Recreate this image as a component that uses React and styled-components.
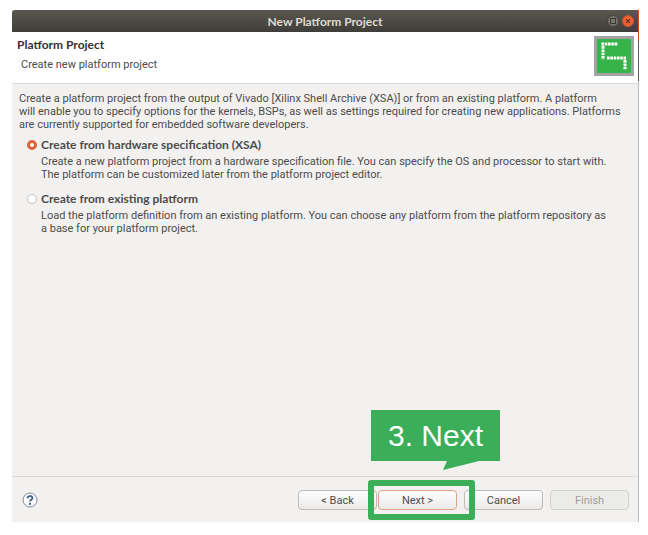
import React, { useState } from 'react';
import styled, { createGlobalStyle, css } from 'styled-components';

const Color = {
    windowBg: '#f2f1f0',
    white: '#ffffff',
    text: '#4c4c4c',
    title: '#dfdbd2',
    green: '#3aae58',
    line: '#dcdad8',
    edge: '#bdbdbd',
};

const OPTIONS = [
    {
        id: 'xsa',
        label: 'Create from hardware specification (XSA)',
        text: 'Create a new platform project from a hardware specification file. You can specify the OS and processor to start with.\nThe platform can be customized later from the platform project editor.',
    },
    {
        id: 'existing',
        label: 'Create from existing platform',
        text: 'Load the platform definition from an existing platform. You can choose any platform from the platform repository as\na base for your platform project.',
    },
];

const INTRO = 'Create a platform project from the output of Vivado [Xilinx Shell Archive (XSA)] or from an existing platform. A platform\nwill enable you to specify options for the kernels, BSPs, as well as settings required for creating new applications. Platforms\nare currently supported for embedded software developers.';

const MaximizeIcon = () => (
    <svg width="12" height="12" viewBox="0 0 12 12" aria-hidden="true">
        <circle cx="6" cy="6" r="5.5" fill="#77746c" stroke="#45443e" />
        <rect x="3.5" y="3.5" width="5" height="5" fill="none" stroke="#3a3934" />
    </svg>
);

const CloseIcon = () => (
    <svg width="12" height="12" viewBox="0 0 12 12" aria-hidden="true">
        <circle cx="6" cy="6" r="5.5" fill="#ee5f33" stroke="#c9552f" />
        <path d="M4.2 4.2l3.6 3.6M7.8 4.2l-3.6 3.6" stroke="#5b301f" strokeWidth="1.2" />
    </svg>
);

const PlatformLogo = () => (
    <svg width="40" height="40" viewBox="0 0 40 40" aria-hidden="true">
        <rect width="40" height="40" fill="#a3a3a3" />
        <rect x="3" y="3" width="34" height="34" fill="#37b34a" />
        <g fill="none" stroke="#fff" strokeWidth="3">
            <path d="M7.4 8H24" strokeDasharray="2.6 .7" />
            <path d="M9 10.1V23.4" strokeDasharray="2.6 .7" />
            <path d="M13 22H32.5" strokeDasharray="2.6 .7" />
            <path d="M31 24.1V34" strokeDasharray="2.6 .7" />
        </g>
    </svg>
);

const HelpIcon = () => (
    <svg width="16" height="16" viewBox="0 0 16 16" aria-hidden="true">
        <circle cx="8" cy="8" r="7" fill="#fafafa" stroke="#7c8ca6" />
        <path d="M5.6 6.2C5.6 3.4 10.4 3.4 10.4 6c0 1.7-2.3 1.8-2.3 3.6" fill="none" stroke="#475f8a" strokeWidth="1.9" />
        <rect x="7" y="10.8" width="2" height="2" fill="#475f8a" />
    </svg>
);

const App = () => {
    const [selected, setSelected] = useState('xsa');

    return (
        <>
            <GlobalStyle />
            <Page>
                <Dialog aria-labelledby="dialog-title">
                    <TitleBar>
                        <Title id="dialog-title">New Platform Project</Title>
                        <WindowControls>
                            <IconButton aria-label="Maximize"><MaximizeIcon /></IconButton>
                            <IconButton aria-label="Close"><CloseIcon /></IconButton>
                        </WindowControls>
                    </TitleBar>

                    <Banner>
                        <div>
                            <Heading>Platform Project</Heading>
                            <Subheading>Create new platform project</Subheading>
                        </div>
                        <PlatformLogo />
                    </Banner>

                    <Body>
                        <Paragraph>{INTRO}</Paragraph>
                        <Options>
                            {OPTIONS.map(({ id, label, text }) => (
                                <div key={id}>
                                    <OptionLabel htmlFor={id}>
                                        <Radio
                                            id={id}
                                            name="source"
                                            checked={selected === id}
                                            onChange={() => setSelected(id)}
                                        />
                                        {label}
                                    </OptionLabel>
                                    <OptionText>{text}</OptionText>
                                </div>
                            ))}
                        </Options>
                    </Body>

                    <Footer>
                        <IconButton aria-label="Help"><HelpIcon /></IconButton>
                        <Actions>
                            <Steps>
                                <Button>&lt; Back</Button>
                                <NextStep>
                                    <Button $primary>Next &gt;</Button>
                                    <Highlight />
                                    <Callout>
                                        3. Next
                                        <CalloutTail />
                                    </Callout>
                                </NextStep>
                            </Steps>
                            <Button>Cancel</Button>
                            <Button disabled>Finish</Button>
                        </Actions>
                    </Footer>
                </Dialog>
            </Page>
        </>
    );
};

const GlobalStyle = createGlobalStyle`
    *, *::before, *::after {
        box-sizing: border-box;
    }

    body {
        margin: 0;
        background: ${Color.white};
        color: ${Color.text};
        font: 11px/13px Roboto, 'Noto Sans', sans-serif;
    }

    button {
        font: inherit;
        color: inherit;
    }
`;

const boldText = css`
    font: bold 12px/13px Lato, 'Open Sans', sans-serif;
`;

const Page = styled.main`
    display: flex;
    min-height: 100vh;
    padding: 10px 9px 13px 12px;
`;

const Dialog = styled.section`
    display: flex;
    flex: 1;
    flex-direction: column;
    min-width: 0;
    background: ${Color.windowBg};
    border-right: 1px solid;
    /* strips of the windows behind show along the right edge */
    border-image: linear-gradient(#cf4a25 32px, #5c5c60 32px 72px, ${Color.edge} 72px) 1;
`;

const TitleBar = styled.header`
    display: grid;
    grid-template-columns: 1fr auto 1fr;
    align-items: center;
    height: 22px;
    padding: 0 4px;
    background: linear-gradient(#5b5850, #3e3d39);
    border-radius: 3px 0 0 0;
`;

const Title = styled.h1`
    ${boldText}
    grid-column: 2;
    margin: 0;
    color: ${Color.title};
`;

const WindowControls = styled.div`
    display: flex;
    gap: 3px;
    justify-self: end;
`;

const IconButton = styled.button`
    display: flex;
    padding: 0;
    background: none;
    border: 0;
`;

const Banner = styled.div`
    display: flex;
    justify-content: space-between;
    padding: 4px 4px 7px 5px;
    background: ${Color.white};
    border-bottom: 1px solid ${Color.line};
`;

const Heading = styled.h2`
    ${boldText}
    margin: 2px 0 7px;
    color: #333;
`;

const Subheading = styled.p`
    margin: 0 4px;
`;

const Body = styled.div`
    flex: 1;
    padding: 8px 7px;
`;

const Paragraph = styled.p`
    margin: 0;
    white-space: pre-line;
`;

const Options = styled.div`
    display: grid;
    gap: 11px;
    padding: 7px 0 0 7px;
`;

const OptionLabel = styled.label`
    ${boldText}
    display: flex;
    align-items: center;
    gap: 3px;
`;

const OptionText = styled(Paragraph)`
    margin: 4px 0 0 15px;
`;

const Radio = styled.input.attrs({ type: 'radio' })`
    appearance: none;
    flex: none;
    width: 10px;
    height: 10px;
    margin: 0 1px;
    background: ${Color.white};
    border: 1px solid #c6c4c2;
    border-radius: 50%;

    &:checked {
        border: 3px solid #dd6339;
    }
`;

const Footer = styled.footer`
    display: flex;
    align-items: center;
    justify-content: space-between;
    height: 46px;
    padding: 1px 9px 0 10px;
    border-top: 1px solid ${Color.line};
`;

const Actions = styled.div`
    display: flex;
    gap: 7px;
`;

const Steps = styled.div`
    display: flex;
    gap: 1px;
`;

const Button = styled.button`
    display: block;
    width: 79px;
    height: 20px;
    padding: 0;
    background: linear-gradient(#fefefe, #ebeae9);
    border: 1px solid #bebbb8;
    border-radius: 4px;

    ${({ $primary }) => $primary && css`
        border-color: #dfa287;
    `}

    &:disabled {
        color: #a09e9c;
        background: #ececeb;
        border-color: #d2d0ce;
    }
`;

// anchors the tutorial marks that lie over the button
const NextStep = styled.div`
    position: relative;
`;

const Highlight = styled.div`
    position: absolute;
    inset: -10px -18px -10px -10px;
    border: 6px solid ${Color.green};
    border-radius: 3px;
    pointer-events: none;
`;

const Callout = styled.div`
    position: absolute;
    top: -80px;
    left: -7px;
    width: 129px;
    padding: 9px 0 8px;
    background: ${Color.green};
    color: ${Color.white};
    font: 30px/34px 'Liberation Sans', Arial, sans-serif;
    text-align: center;
`;

const CalloutTail = styled.span`
    position: absolute;
    top: 100%;
    left: 72px;
    width: 36px;
    height: 9px;
    background: ${Color.green};
    clip-path: polygon(4px 0, 100% 0, 0 100%);
`;

export default App;
